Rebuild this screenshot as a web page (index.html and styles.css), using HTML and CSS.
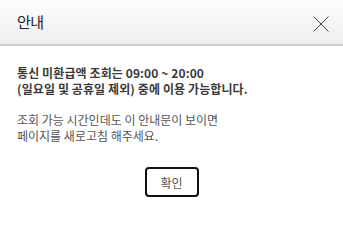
FILE: index.html
```html
<!DOCTYPE html>
<html>
<head>
    <meta charset="utf-8">
    <link rel="stylesheet" href="styles.css">
</head>
<body>
    <div class="dialog">
        <div class="dialog-header">
            <h1 class="dialog-title">안내</h1>
            <button class="close-btn" aria-label="닫기">
                <svg width="16" height="16" viewBox="0 0 16 16">
                    <path d="M0.5 0.5 L15.5 15.5 M15.5 0.5 L0.5 15.5" stroke="#444" stroke-width="1" fill="none"/>
                </svg>
            </button>
        </div>
        <div class="dialog-body">
            <p class="notice strong">통신 미환급액 조회는 09:00 ~ 20:00<br>(일요일 및 공휴일 제외) 중에 이용 가능합니다.</p>
            <p class="notice">조회 가능 시간인데도 이 안내문이 보이면<br>페이지를 새로고침 해주세요.</p>
        </div>
        <div class="dialog-footer">
            <button class="ok-btn">확인</button>
        </div>
    </div>
</body>
</html>
```

FILE: styles.css
```css
body {
    margin: 0;
    background: #fff;
    font-family: 'Noto Sans CJK KR', 'Noto Sans', sans-serif;
}

.dialog {
    width: 343px;
    height: 235px;
    background: #fff;
}

.dialog-header {
    height: 44px;
    display: flex;
    align-items: center;
    justify-content: space-between;
    padding: 0 14px 0 17px;
    background: linear-gradient(to bottom, #fdfdfd, #eeeeee);
    border-bottom: 2px solid #d0d0d0;
}

.dialog-title {
    margin: 0 0 2px;
    font-size: 15px;
    font-weight: normal;
    color: #222;
    letter-spacing: -0.5px;
}

.close-btn {
    border: 0;
    background: none;
    padding: 0;
    width: 16px;
    height: 16px;
    margin-top: 3px;
    cursor: pointer;
}

.dialog-body {
    padding: 19px 17px 0;
}

.notice {
    margin: 0 0 15px;
    font-size: 12px;
    line-height: 16px;
    color: #555;
}

.notice.strong {
    color: #3a3a3a;
    font-weight: bold;
    letter-spacing: 0.1px;
}

.dialog-footer {
    display: flex;
    justify-content: center;
    padding-top: 8px;
}

.ok-btn {
    width: 54px;
    height: 30px;
    border: 2px solid #111;
    border-radius: 4px;
    background: #fff;
    font-family: inherit;
    font-size: 12px;
    color: #555;
    padding: 0;
}
```
